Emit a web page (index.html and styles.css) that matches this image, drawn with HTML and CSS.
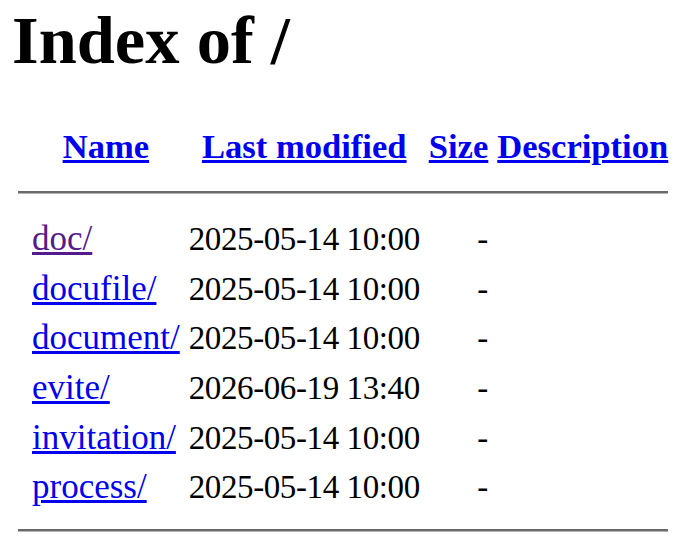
FILE: index.html
```html
<!DOCTYPE html>
<html>
<head>
  <title>Index of /</title>
  <link rel="stylesheet" href="styles.css">
</head>
<body>
<h1>Index of /</h1>
  <table>
   <tr class="head"><th class="ico"></th><th><a href="?C=N;O=D">Name</a></th><th><a href="?C=M;O=A">Last modified</a></th><th><a href="?C=S;O=A">Size</a></th><th><a href="?C=D;O=A">Description</a></th></tr>
   <tr><th colspan="5"><hr></th></tr>
<tr><td class="ico"></td><td><a class="seen" href="doc/">doc/</a></td><td class="date">2025-05-14 10:00</td><td class="size">-</td><td>&nbsp;</td></tr>
<tr><td class="ico"></td><td><a href="docufile/">docufile/</a></td><td class="date">2025-05-14 10:00</td><td class="size">-</td><td>&nbsp;</td></tr>
<tr><td class="ico"></td><td><a href="document/">document/</a></td><td class="date">2025-05-14 10:00</td><td class="size">-</td><td>&nbsp;</td></tr>
<tr><td class="ico"></td><td><a href="evite/">evite/</a></td><td class="date">2026-06-19 13:40</td><td class="size">-</td><td>&nbsp;</td></tr>
<tr><td class="ico"></td><td><a href="invitation/">invitation/</a></td><td class="date">2025-05-14 10:00</td><td class="size">-</td><td>&nbsp;</td></tr>
<tr><td class="ico"></td><td><a href="process/">process/</a></td><td class="date">2025-05-14 10:00</td><td class="size">-</td><td>&nbsp;</td></tr>
   <tr><th colspan="5"><hr></th></tr>
</table>
</body>
</html>
```

FILE: styles.css
```css
body {
  margin: 0;
  padding: 1px 0 0 12px;
  background: #fff;
  color: #000;
  font-family: "Liberation Serif", serif;
  font-size: 35px;
}
h1 {
  margin: 0 0 44px;
  font-size: 68.5px;
  font-weight: bold;
}
a {
  color: #0000ee;
}
a.seen {
  color: #551a8b;
}
table {
  border-spacing: 3px;
}
th {
  padding: 0 3px;
  font-size: 34.6px;
}
.head th {
  padding-bottom: 7px;
}
td {
  padding: 4.3px 3px;
  line-height: 38px;
  vertical-align: middle;
}
.ico {
  width: 5px;
  padding: 0 3px;
}
.date {
  text-align: right;
  font-size: 33px;
  letter-spacing: -0.4px;
}
.size {
  text-align: right;
  font-size: 33px;
}
hr {
  margin: 15px 0 19px;
  border: 0;
  border-top: 2px solid #6a6a6a;
  border-bottom: 1px solid #b4b4b4;
  height: 0;
}
```
